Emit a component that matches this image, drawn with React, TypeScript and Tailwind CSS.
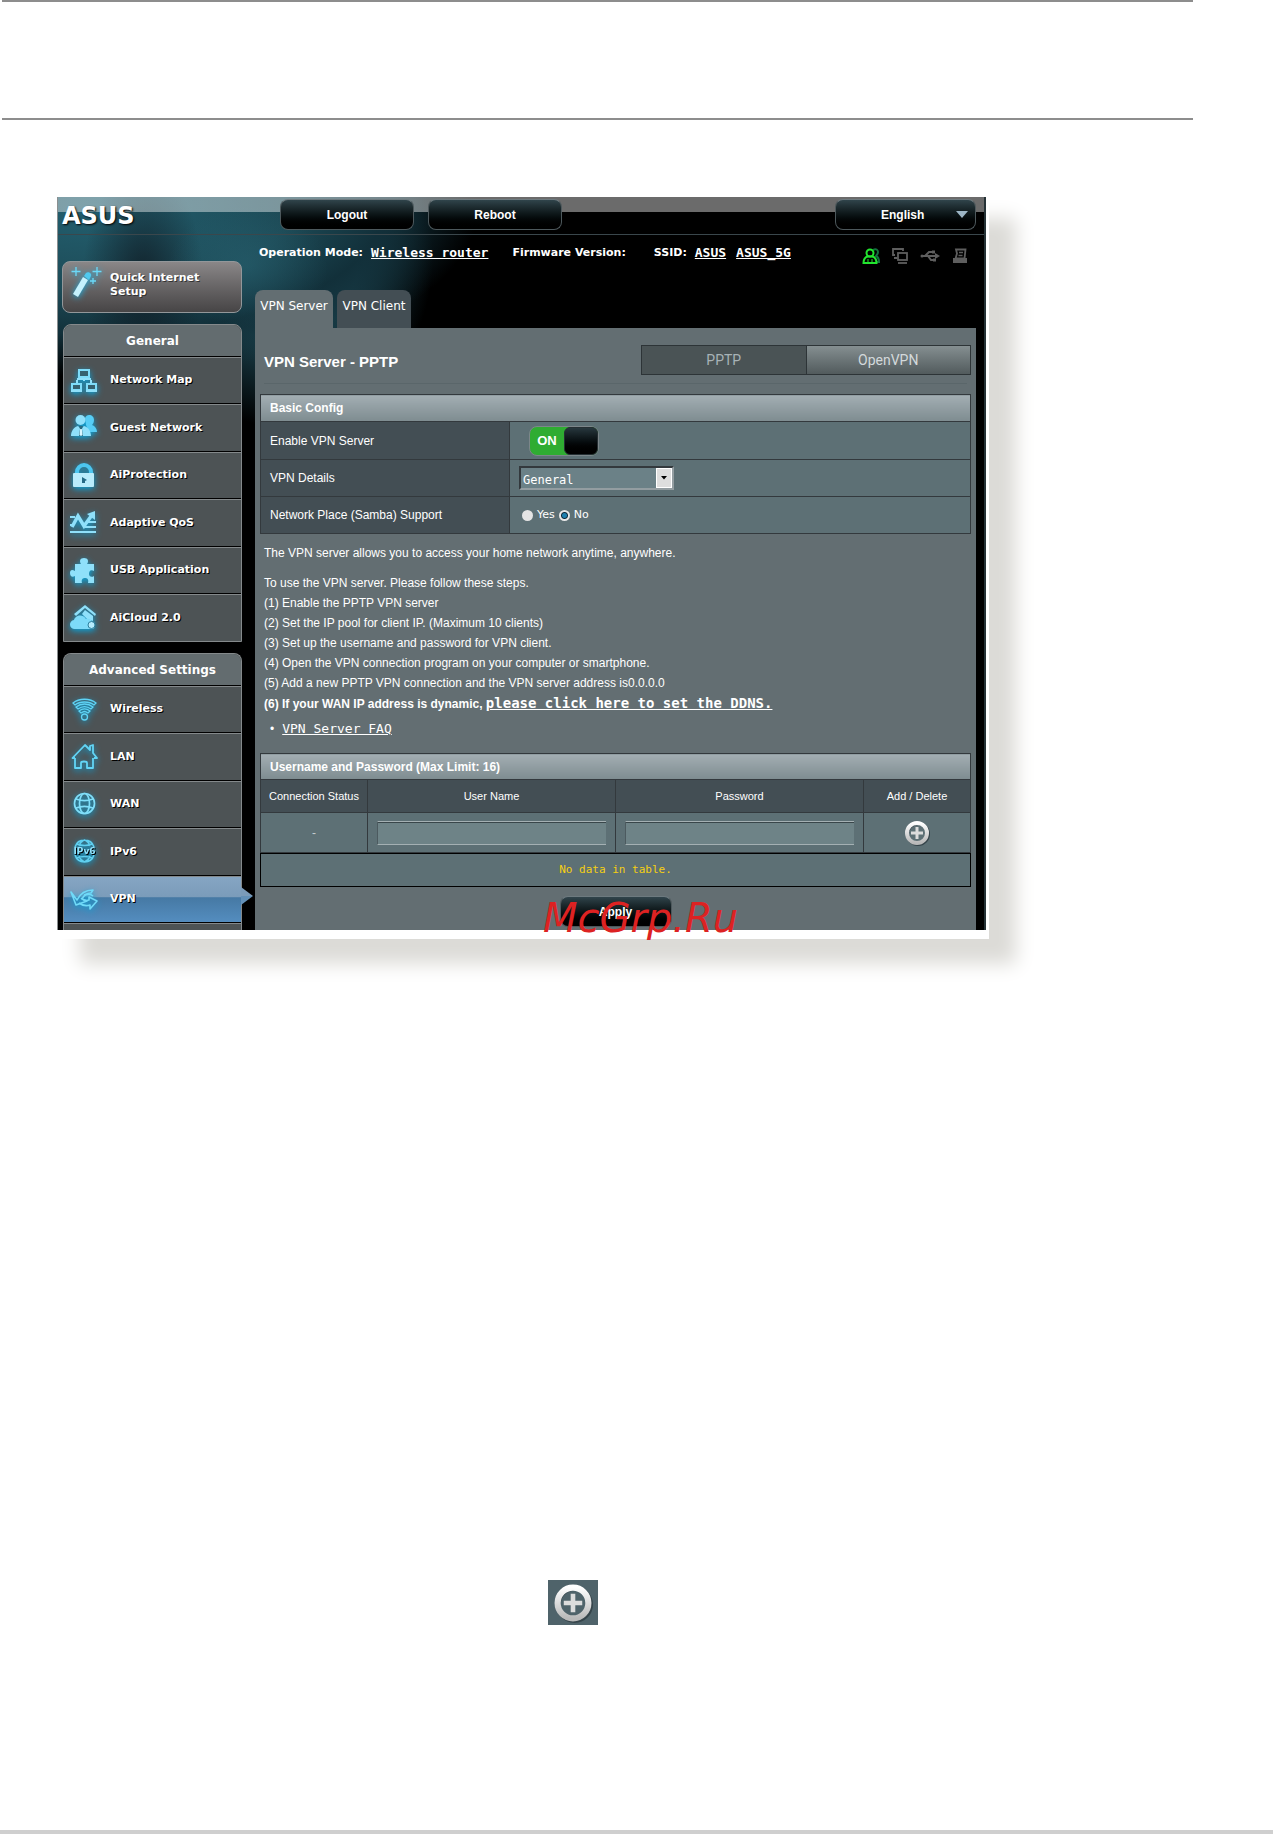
import { useState, type ReactNode } from "react";

type MenuItem = { label: string; icon: ReactNode; active?: boolean };

/* ---------- icons ---------- */

function Glow({ children }: { children: ReactNode }) {
  return (
    <svg
      viewBox="0 0 28 28"
      className="size-7 shrink-0 overflow-visible drop-shadow-[0_2px_3px_#0aa5dc]"
      fill="#8fe0fa"
      stroke="none"
      aria-hidden="true"
    >
      {children}
    </svg>
  );
}

const MapIcon = (
  <Glow>
    <g fill="#35616f" stroke="#7edcf9" strokeWidth="2">
      <rect x="9" y="3" width="10" height="7" />
      <rect x="2" y="17" width="9" height="6" />
      <rect x="17" y="17" width="9" height="6" />
    </g>
    <path d="M7 11h14v2H7zM13 11h2v3h-2zM6 13h2v3H6zM20 13h2v3h-2zM1 23h11v2H1zM16 23h11v2H16z" />
  </Glow>
);

const GuestIcon = (
  <Glow>
    <path d="M19 1c3 0 5 2 5 5 0 2-1 4-2 5 3 1 5 4 5 7h-8l-3-7-1-7c1-2 2-3 4-3z" fill="#56cdf5" />
    <circle cx="10.500" cy="6" r="5" />
    <path d="M1 22c0-5 3-9 7-10l3 3 3-3c4 1 7 5 7 10z" />
    <path d="M9 12h4l-1 3 1 7H9l1-7z" fill="#2c6b80" />
    <path d="M10.200 15h1.600l.7 6-1.500 1-1.500-1z" fill="#d9f6ff" />
  </Glow>
);

const LockIcon = (
  <Glow>
    <path d="M5 12V10a9 9 0 0 1 18 0v2h-4v-2a5 5 0 0 0-10 0v2z" fill="#4cc6f0" />
    <rect x="3" y="11" width="21" height="14" rx="1" fill="#b9ecfc" />
    <path d="M12 15l5 3-2 1v2h-3z" fill="#256a86" />
  </Glow>
);

const QosIcon = (
  <Glow>
    <path d="M0 7h5v2H0zM18 12h8v2h-8zM0 15h4v2H0zM15 17h11v2H15zM0 22h26v2H0z" />
    <path d="M2 18L8 7l6 10 8-11" fill="none" stroke="#8fe0fa" strokeWidth="3.500" />
    <path d="M17 5l8-3v9z" />
  </Glow>
);

const UsbAppIcon = (
  <Glow>
    <path d="M5 7h6c-2-3-1-6 3-6s5 3 3 6h7v7c-4-2-5 1-5 3s2 4 5 2v7h-6c1-4-1-5-3-5s-4 1-3 5H5v-7c-3 2-5 0-5-3s2-4 5-2z" />
  </Glow>
);

const CloudIcon = (
  <Glow>
    <path d="M4 10L15 1l11 9-1 2-10-8-9 8z" />
    <path d="M15 6l8 6v5l-6-2-5-5z" />
    <path d="M5 25a4.500 4.500 0 0 1-1-9c1-4 8-7 12-1 4-1 6 1 6 4a3 3 0 1 1-1 6z" fill="#7ddaf8" />
    <circle cx="21.500" cy="21" r="3.500" fill="#b5ecfd" stroke="#2a7d9b" />
  </Glow>
);

const WirelessIcon = (
  <Glow>
    <g fill="none" stroke="#5fd3f5" strokeWidth="1.300">
      <path d="M3 7c6-5 17-5 23 0l-2 2C19 5 10 5 5 9z" />
      <path d="M6 11c5-4 12-4 17 0l-2 2c-4-3-9-3-13 0z" />
      <path d="M9 15c4-3 7-3 11 0l-2 2c-3-2-4-2-7 0z" />
      <circle cx="14.500" cy="21" r="3" />
    </g>
  </Glow>
);

const LanIcon = (
  <Glow>
    <path
      d="M5 15v10h6v-5c0-2 6-2 6 0v5h6V15M5 15H2.500L15 2l5 5V3l3-1v8l4 5h-3"
      fill="none"
      stroke="#62d5f6"
      strokeWidth="1.800"
      strokeLinejoin="round"
    />
  </Glow>
);

const WanIcon = (
  <Glow>
    <g fill="none" stroke="#7fdef9" strokeWidth="1.700">
      <circle cx="14.500" cy="12.500" r="10" />
      <ellipse cx="14.500" cy="12.500" rx="5" ry="10" />
      <path d="M6 8c5 2 12 2 17 0M6 17c5-2 12-2 17 0" />
    </g>
  </Glow>
);

const Ipv6Icon = (
  <Glow>
    <g fill="none" stroke="#5fcfef" strokeWidth="1.600">
      <path d="M5 9a10 10 0 0 1 19 0M5 17a10 10 0 0 0 19 0M9 8c1-4 3-5 5.500-6 2.500 1 4.500 2 5.500 6M9 18c1 3 3 5 5.500 6 2.500-1 4.500-3 5.500-6M7 6c5 2 10 2 15 0M7 20c5-2 10-2 15 0" />
    </g>
    <text x="14.500" y="16" textAnchor="middle" className="font-['DejaVu_Sans'] text-[9px] font-bold">
      IPv6
    </text>
  </Glow>
);

const VpnIcon = (
  <Glow>
    <g fill="none" stroke="#70daf8" strokeWidth="1.600" strokeLinejoin="round">
      <path d="M1 6l6 8c3-6 9-10 16-10l-2 3c-4 0-7 2-9 6l5 2-11 4z" />
      <path d="M9 17c4 3 8 3 11 2v4l7-8-8-4v3c-3 1-6 0-8-2M14 9c4-1 7-1 9 1" />
    </g>
  </Glow>
);

const WandIcon = (
  <svg viewBox="0 0 32 36" className="h-9 w-8 shrink-0 overflow-visible drop-shadow-[0_1px_3px_#18b4ea]" aria-hidden="true">
    <path d="M3 28L13 11l5 3L8 31z" fill="#c5f1fd" />
    <path d="M14 10l2-3c2-2 6 0 5 3l-2 4z" fill="#4fc9ef" />
    <path d="M6 1v9M1.500 5.500h9M27 1v9M22.500 5.500h9M23 12v6M20 15h6" fill="none" stroke="#6cd9f8" strokeWidth="1.300" />
  </svg>
);

function PlusIcon({ className }: { className: string }) {
  return (
    <svg viewBox="0 0 26 26" className={className} aria-hidden="true">
      <defs>
        <linearGradient id="ring" x1="0" y1="0" x2="0" y2="1">
          <stop offset="0" stopColor="#ffffff" />
          <stop offset="1" stopColor="#b9b9b9" />
        </linearGradient>
      </defs>
      <circle cx="14" cy="14" r="10.500" fill="none" stroke="#35444a" strokeWidth="3" />
      <circle cx="13" cy="13" r="10" fill="none" stroke="url(#ring)" strokeWidth="4" />
      <path d="M11.500 7h3v4.500H19v3h-4.500V19h-3v-4.500H7v-3h4.500z" fill="#dcdcdc" />
    </svg>
  );
}

function StatusIcons() {
  return (
    <div className="flex items-center gap-3">
      <svg viewBox="0 0 18 16" className="h-4 w-[18px]" fill="none" strokeWidth="2" aria-hidden="true">
        <path d="M11 2c3-2 5 0 5 2s-1 3-2 4c2 1 3 3 3 6h-2" stroke="#14713f" />
        <circle cx="8" cy="5" r="3.500" stroke="#22e52f" />
        <path d="M1.500 15c0-4 2-6 4.500-6.500h4c2.500.5 4.500 2.500 4.500 6.500z" stroke="#22e52f" />
        <path d="M6 11v4M10 11v4" stroke="#22e52f" strokeWidth="1" />
      </svg>
      <svg viewBox="0 0 16 16" className="size-4" fill="none" stroke="#5e5e5e" strokeWidth="1.800" aria-hidden="true">
        <path d="M11 3V1H1v6h2M2 10h3" />
        <rect x="6" y="5" width="9" height="7" />
        <path d="M6 15h9" />
      </svg>
      <svg viewBox="0 0 20 14" className="h-[14px] w-5" fill="none" stroke="#5e5e5e" strokeWidth="2" aria-hidden="true">
        <path d="M2 7h14M5 7l4-4h4M8 7l3 4h3" />
        <circle cx="2" cy="7" r="1.500" fill="#5e5e5e" stroke="none" />
        <path d="M15 4l5 3-5 3z" fill="#5e5e5e" stroke="none" />
        <path d="M12 1.500h3v3h-3zM13 9.500h3v3h-3z" fill="#5e5e5e" stroke="none" />
      </svg>
      <svg viewBox="0 0 16 16" className="size-4" fill="none" stroke="#5e5e5e" aria-hidden="true">
        <path d="M4 1.500h9.500l-1 9H3.500l1.500-5z" strokeWidth="1.800" />
        <path d="M7 4.500h4M6.500 7.500h4" strokeWidth="1.500" />
        <path d="M1 10h2v1h10v-1h2v5H1z" fill="#5e5e5e" stroke="none" />
      </svg>
    </div>
  );
}

/* ---------- data ---------- */

const generalMenu: MenuItem[] = [
  { label: "Network Map", icon: MapIcon },
  { label: "Guest Network", icon: GuestIcon },
  { label: "AiProtection", icon: LockIcon },
  { label: "Adaptive QoS", icon: QosIcon },
  { label: "USB Application", icon: UsbAppIcon },
  { label: "AiCloud 2.0", icon: CloudIcon },
];

const advancedMenu: MenuItem[] = [
  { label: "Wireless", icon: WirelessIcon },
  { label: "LAN", icon: LanIcon },
  { label: "WAN", icon: WanIcon },
  { label: "IPv6", icon: Ipv6Icon },
  { label: "VPN", icon: VpnIcon, active: true },
];

const steps = [
  "To use the VPN server. Please follow these steps.",
  "(1) Enable the PPTP VPN server",
  "(2) Set the IP pool for client IP. (Maximum 10 clients)",
  "(3) Set up the username and password for VPN client.",
  "(4) Open the VPN connection program on your computer or smartphone.",
  "(5) Add a new PPTP VPN connection and the VPN server address is0.0.0.0",
];

/* ---------- pieces ---------- */

const darkButton =
  "rounded-lg border border-[#4d585c] border-t-[#6d7a7f] bg-gradient-to-b from-[#30444b] via-[#0c1517] to-black text-xs font-bold text-white";

function MenuGroup({ title, items, open }: { title: string; items: MenuItem[]; open?: boolean }) {
  return (
    <nav
      className={`ml-px rounded-t-lg border border-[#84898b] bg-[#4d5355] font-['DejaVu_Sans',Verdana,sans-serif] font-bold text-white ${
        open ? "border-b-0" : ""
      }`}
    >
      <h2 className="flex h-[31px] items-center justify-center rounded-t-lg bg-[#636c6f] text-xs">{title}</h2>
      <ul>
        {items.map((item) => (
          <li key={item.label} className="relative h-[47px] border-t border-black even:h-12">
            <a
              href="#"
              className={`flex h-full items-center gap-3 border-t border-[#84898b] pl-1.5 text-[11px] [text-shadow:1px_1px_0_#000] ${
                item.active ? "bg-[linear-gradient(#85a5c3,#7b9cba_44%,#4679a4_46%,#548dbf)]" : ""
              }`}
            >
              {item.icon}
              {item.label}
            </a>
            {item.active && (
              <svg viewBox="0 0 12 18" className="absolute top-[11px] left-full h-[18px] w-3" aria-hidden="true">
                <path d="M0 0l12 9H0z" fill="#7b9cba" />
                <path d="M0 9h12L0 18z" fill="#6391b8" />
              </svg>
            )}
          </li>
        ))}
        {open && (
          <li className="h-2 border-t border-black">
            <div className="border-t border-[#84898b]" />
          </li>
        )}
      </ul>
    </nav>
  );
}

function TopBar() {
  return (
    <header className="flex h-[38px] items-start border-b border-[#3a474c] bg-[linear-gradient(rgba(255,255,255,.42)_0_15px,transparent_15px)] pt-0.5 pr-2 pl-1">
      <span className="w-[218px] pt-[5px] font-['DejaVu_Sans',Verdana,sans-serif] text-2xl leading-6 font-bold text-white [text-shadow:1px_1px_2px_#000]">
        ASUS
      </span>
      <button className={`h-[31px] w-[134px] ${darkButton}`}>Logout</button>
      <button className={`ml-[14px] h-[31px] w-[134px] ${darkButton}`}>Reboot</button>
      <div className="relative ml-auto">
        <select
          aria-label="Language"
          className={`h-[31px] w-[141px] appearance-none pr-6 pl-[45px] ${darkButton}`}
        >
          <option>English</option>
        </select>
        <svg viewBox="0 0 12 8" className="pointer-events-none absolute top-3 right-2 h-2 w-3" aria-hidden="true">
          <path d="M0 0h12L6 7z" fill="#9db6c6" />
        </svg>
      </div>
    </header>
  );
}

function BasicConfig() {
  const [enabled, setEnabled] = useState(true);
  const labelCell = "border border-[#33393d] bg-[#434e54] pl-[9px] text-left font-normal";
  const valueCell = "border border-[#33393d] bg-[#5d7075]";
  const radio =
    "size-[11px] appearance-none rounded-full bg-[#e4e4e4] checked:bg-[radial-gradient(#1d7fae_0_2px,#0e2a3c_3px,#e8e8e8_4px)]";

  return (
    <table className="mt-[10px] w-full table-fixed border-collapse text-xs text-white">
      <colgroup>
        <col className="w-[249px]" />
        <col />
      </colgroup>
      <thead>
        <tr>
          <th
            colSpan={2}
            className="h-[27px] border border-[#33393d] bg-gradient-to-b from-[#a3aeb3] to-[#7e8c90] pl-[9px] text-left"
          >
            Basic Config
          </th>
        </tr>
      </thead>
      <tbody>
        <tr className="h-[38px]">
          <th className={labelCell}>Enable VPN Server</th>
          <td className={`${valueCell} pl-[19px]`}>
            <button
              role="switch"
              aria-checked={enabled}
              aria-label="Enable VPN Server"
              onClick={() => setEnabled(!enabled)}
              className="flex h-[30px] w-[70px] items-center rounded-lg border border-[#7c868a] bg-[#2fac32] text-[13px] font-bold"
            >
              <span className="flex-1">ON</span>
              <span className="h-full w-[34px] rounded-md border border-[#252f33] bg-gradient-to-b from-[#27373d] to-black" />
            </button>
          </td>
        </tr>
        <tr className="h-[37px]">
          <th className={labelCell}>
            <label htmlFor="details">VPN Details</label>
          </th>
          <td className={`${valueCell} pl-[9px]`}>
            <div className="relative w-[155px]">
              <select
                id="details"
                className="block h-6 w-full appearance-none border-2 border-[#939da1] border-t-[#33393d] border-l-[#33393d] bg-[#6b8187] pt-1 pl-0.5 font-['DejaVu_Sans_Mono',monospace] text-xs"
              >
                <option>General</option>
              </select>
              <span className="pointer-events-none absolute top-0.5 right-0.5 flex h-5 w-4 items-center justify-center border border-white bg-[#dedede]">
                <svg viewBox="0 0 6 4" className="h-1 w-1.5" aria-hidden="true">
                  <path d="M0 0h6L3 3.500z" fill="#000" />
                </svg>
              </span>
            </div>
          </td>
        </tr>
        <tr className="h-[37px]">
          <th className={labelCell}>Network Place (Samba) Support</th>
          <td className={`${valueCell} pl-3`}>
            <div className="flex items-center gap-1 font-['DejaVu_Sans',Verdana,sans-serif] text-[11px]">
              <input id="samba-yes" type="radio" name="samba" className={radio} />
              <label htmlFor="samba-yes">Yes</label>
              <input id="samba-no" type="radio" name="samba" defaultChecked className={radio} />
              <label htmlFor="samba-no">No</label>
            </div>
          </td>
        </tr>
      </tbody>
    </table>
  );
}

function UserTable() {
  const headCell = "h-[33px] border border-[#33393d] bg-[#434e54] font-normal";
  const cell = "h-10 border border-[#33393d] bg-[#5d7075] text-center";
  const field =
    "mx-auto block h-6 w-[229px] border border-r-0 border-[#a4b0b3] border-l-[#4c5a5f] bg-[#6e8387] px-1 shadow-[inset_0_1px_0_#39464a]";

  return (
    <>
      <table className="mt-[14px] w-full table-fixed border-collapse text-xs text-white">
        <colgroup>
          <col className="w-[107px]" />
          <col />
          <col />
          <col className="w-[107px]" />
        </colgroup>
        <thead>
          <tr>
            <th
              colSpan={4}
              className="h-[26px] border border-[#33393d] bg-gradient-to-b from-[#a3aeb3] to-[#7e8c90] pl-[9px] text-left"
            >
              Username and Password (Max Limit: 16)
            </th>
          </tr>
          <tr className="text-[11px]">
            <th className={headCell}>Connection Status</th>
            <th className={headCell}>User Name</th>
            <th className={headCell}>Password</th>
            <th className={headCell}>Add / Delete</th>
          </tr>
        </thead>
        <tbody>
          <tr>
            <td className={`${cell} text-[#c3cccf]`}>-</td>
            <td className={cell}>
              <input aria-label="User Name" type="text" className={field} />
            </td>
            <td className={cell}>
              <input aria-label="Password" type="text" className={field} />
            </td>
            <td className={cell}>
              <button aria-label="Add" className="mx-auto block">
                <PlusIcon className="size-[26px]" />
              </button>
            </td>
          </tr>
        </tbody>
      </table>
      <p className="flex h-[34px] items-center justify-center border border-black bg-[#5d7075] font-['DejaVu_Sans_Mono',monospace] text-[11px] text-[#f5cf12]">
        No data in table.
      </p>
    </>
  );
}

function RouterConsole() {
  return (
    <div className="border-r-2 border-l border-r-[#253236] border-l-[#8b8f90] bg-black bg-[radial-gradient(ellipse_80px_60px_at_190px_70px,rgba(42,104,120,.45),transparent),radial-gradient(ellipse_60px_110px_at_85px_80px,rgba(14,22,30,.75),transparent),radial-gradient(ellipse_380px_170px_at_40px_10px,#236070_0%,#1d4a56_50%,#12303a_75%,transparent_100%),radial-gradient(ellipse_150px_170px_at_225px_60px,#1a3f4a_50%,transparent)] bg-no-repeat">
      <TopBar />
      <div className="flex pr-2 pl-1">
        <aside className="w-[180px] shrink-0 pt-[26px]">
          <button className="mb-[11px] flex h-[52px] w-full items-start gap-2 rounded-lg border border-[#93979a] bg-gradient-to-b from-[#8a8788] to-[#474546] pt-1 pl-[7px] text-left font-['DejaVu_Sans',Verdana,sans-serif] text-[11px] leading-[14px] font-bold text-white [text-shadow:1px_1px_0_#333]">
            {WandIcon}
            <span className="pt-[5px]">
              Quick Internet
              <br />
              Setup
            </span>
          </button>
          <MenuGroup title="General" items={generalMenu} />
          <div className="h-[11px]" />
          <MenuGroup title="Advanced Settings" items={advancedMenu} open />
        </aside>

        <main className="ml-[13px] flex min-w-0 flex-1 flex-col">
          <div className="flex h-[55px] items-start pt-[9px] pr-2 pl-1 font-['DejaVu_Sans',Verdana,sans-serif] text-[11px] leading-[18px] font-bold text-white">
            <span>Operation Mode:</span>
            <a href="#" className="ml-2 font-['DejaVu_Sans_Mono',monospace] text-[13px] underline">
              Wireless router
            </a>
            <span className="ml-6">Firmware Version:</span>
            <span className="ml-7">SSID:</span>
            <a href="#" className="ml-2 font-['DejaVu_Sans_Mono',monospace] text-[13px] underline">
              ASUS
            </a>
            <a href="#" className="ml-2.5 font-['DejaVu_Sans_Mono',monospace] text-[13px] underline">
              ASUS_5G
            </a>
            <div className="ml-auto pt-1">
              <StatusIcons />
            </div>
          </div>

          <div className="flex h-[38px] gap-1 font-['DejaVu_Sans',Verdana,sans-serif] text-xs text-white">
            <button className="w-[78px] rounded-t-lg bg-[#636e72] pb-1.5">VPN Server</button>
            <button className="w-[74px] rounded-t-lg bg-[#434e54] pb-1.5">VPN Client</button>
          </div>

          <section className="flex-1 bg-[#636e72] px-[5px] pt-[17px]">
            <div className="flex h-[30px] items-center justify-between pl-1">
              <h1 className="pt-1 text-[15px] font-bold text-white">VPN Server - PPTP</h1>
              <div className="flex h-full w-[330px] border border-[#2d3437] font-[Roboto,sans-serif] text-sm">
                <button className="flex-1 bg-[#4a5355] text-[#a7b2b6]">PPTP</button>
                <button className="flex-1 border-l border-[#2d3437] bg-gradient-to-b from-[#858f91] to-[#525b5d] text-[#d3d9db]">
                  OpenVPN
                </button>
              </div>
            </div>
            <hr className="mx-1 mt-2 border-[#5a666a]" />

            <BasicConfig />

            <div className="mt-[9px] pl-1 text-xs leading-5 text-white">
              <p className="mb-[10px]">The VPN server allows you to access your home network anytime, anywhere.</p>
              {steps.map((step) => (
                <p key={step}>{step}</p>
              ))}
              <p className="font-bold">
                (6) If your WAN IP address is dynamic,{" "}
                <a href="#" className="font-['DejaVu_Sans_Mono',monospace] text-sm leading-5 underline">
                  please click here to set the DDNS.
                </a>
              </p>
              <ul className="mt-[5px] pl-1.5">
                <li className="flex gap-2">
                  <span>•</span>
                  <a href="#" className="font-['DejaVu_Sans_Mono',monospace] text-[13px] underline">
                    VPN Server FAQ
                  </a>
                </li>
              </ul>
            </div>

            <UserTable />

            <div className="relative mt-[9px] flex justify-center">
              <button className={`h-[31px] w-[112px] ${darkButton}`}>Apply</button>
              <span className="pointer-events-none absolute -top-1 left-[283px] font-['DejaVu_Sans',sans-serif] text-[40px] leading-[52px] text-[#dd2222] italic">
                McGrp.Ru
              </span>
            </div>
          </section>
        </main>
      </div>
    </div>
  );
}

export default function App() {
  return (
    <div className="flex min-h-screen flex-col bg-white font-['Liberation_Sans',Arial,sans-serif]">
      <div className="mr-20 ml-0.5 h-[120px] border-t-2 border-b-2 border-[#8d8d8d]" />

      <div className="mt-[77px] ml-[57px] w-full max-w-[932px] bg-white pr-[3px] pb-[9px] shadow-[25px_23px_18px_2px_#dcdbd7]">
        <RouterConsole />
      </div>

      <div className="mt-[641px] ml-[548px] flex h-[45px] w-[50px] items-center justify-center bg-[#4f636a]">
        <PlusIcon className="size-10" />
      </div>

      <footer className="mt-auto h-1 bg-[#cfcfcf]" />
    </div>
  );
}
